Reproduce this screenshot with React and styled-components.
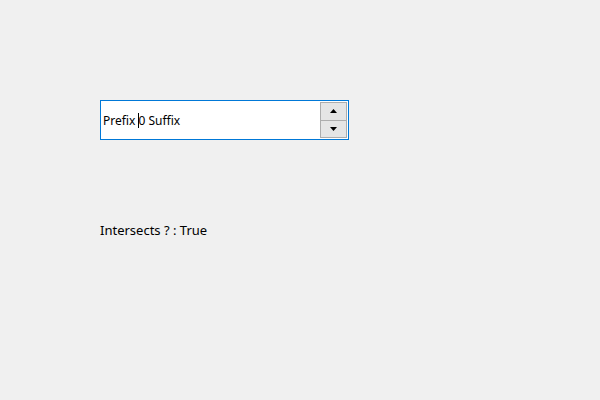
import React from "react";
import styled, { createGlobalStyle } from "styled-components";

const Global = createGlobalStyle`
  body {
    margin: 0;
    background: #f0f0f0;
    font-family: "Noto Sans", "Liberation Sans", sans-serif;
  }
`;

const Page = styled.div`
  width: 600px;
  height: 400px;
  padding: 100px 0 0 100px;
  box-sizing: border-box;
  display: flex;
  flex-direction: column;
`;

const SpinBox = styled.div`
  width: 249px;
  height: 40px;
  box-sizing: border-box;
  border: 1px solid #0078d7;
  background: #fff;
  display: flex;
  align-items: stretch;
`;

const Field = styled.div`
  flex: 1;
  display: flex;
  align-items: center;
  padding-left: 2px;
  font-size: 12px;
  color: #000;
  white-space: pre;
`;

const Caret = styled.span`
  display: inline-block;
  width: 1px;
  height: 15px;
  background: #000;
  margin-right: -1px;
`;

const Buttons = styled.div`
  width: 27px;
  display: flex;
  flex-direction: column;
  padding: 1px 1px 1px 0;
`;

const StepButton = styled.div`
  flex: 1;
  box-sizing: border-box;
  border: 1px solid #adadad;
  border-top-width: ${(p) => (p.$down ? "0" : "1px")};
  background: #e5e5e5;
  display: flex;
  align-items: center;
  justify-content: center;
`;

const Label = styled.div`
  margin-top: 81px;
  font-size: 13px;
  color: #000;
`;

const Arrow = ({ down }) => (
  <svg width="7" height="4" viewBox="0 0 7 4">
    {down ? <polygon points="0,0 7,0 3.5,4" fill="#000" /> : <polygon points="0,4 7,4 3.5,0" fill="#000" />}
  </svg>
);

export default function App() {
  return (
    <>
      <Global />
      <Page>
        <SpinBox>
          <Field>
            {"Prefix "}<Caret />{"0 Suffix"}
          </Field>
          <Buttons>
            <StepButton>
              <Arrow />
            </StepButton>
            <StepButton $down>
              <Arrow down />
            </StepButton>
          </Buttons>
        </SpinBox>
        <Label>Intersects ? : True</Label>
      </Page>
    </>
  );
}
